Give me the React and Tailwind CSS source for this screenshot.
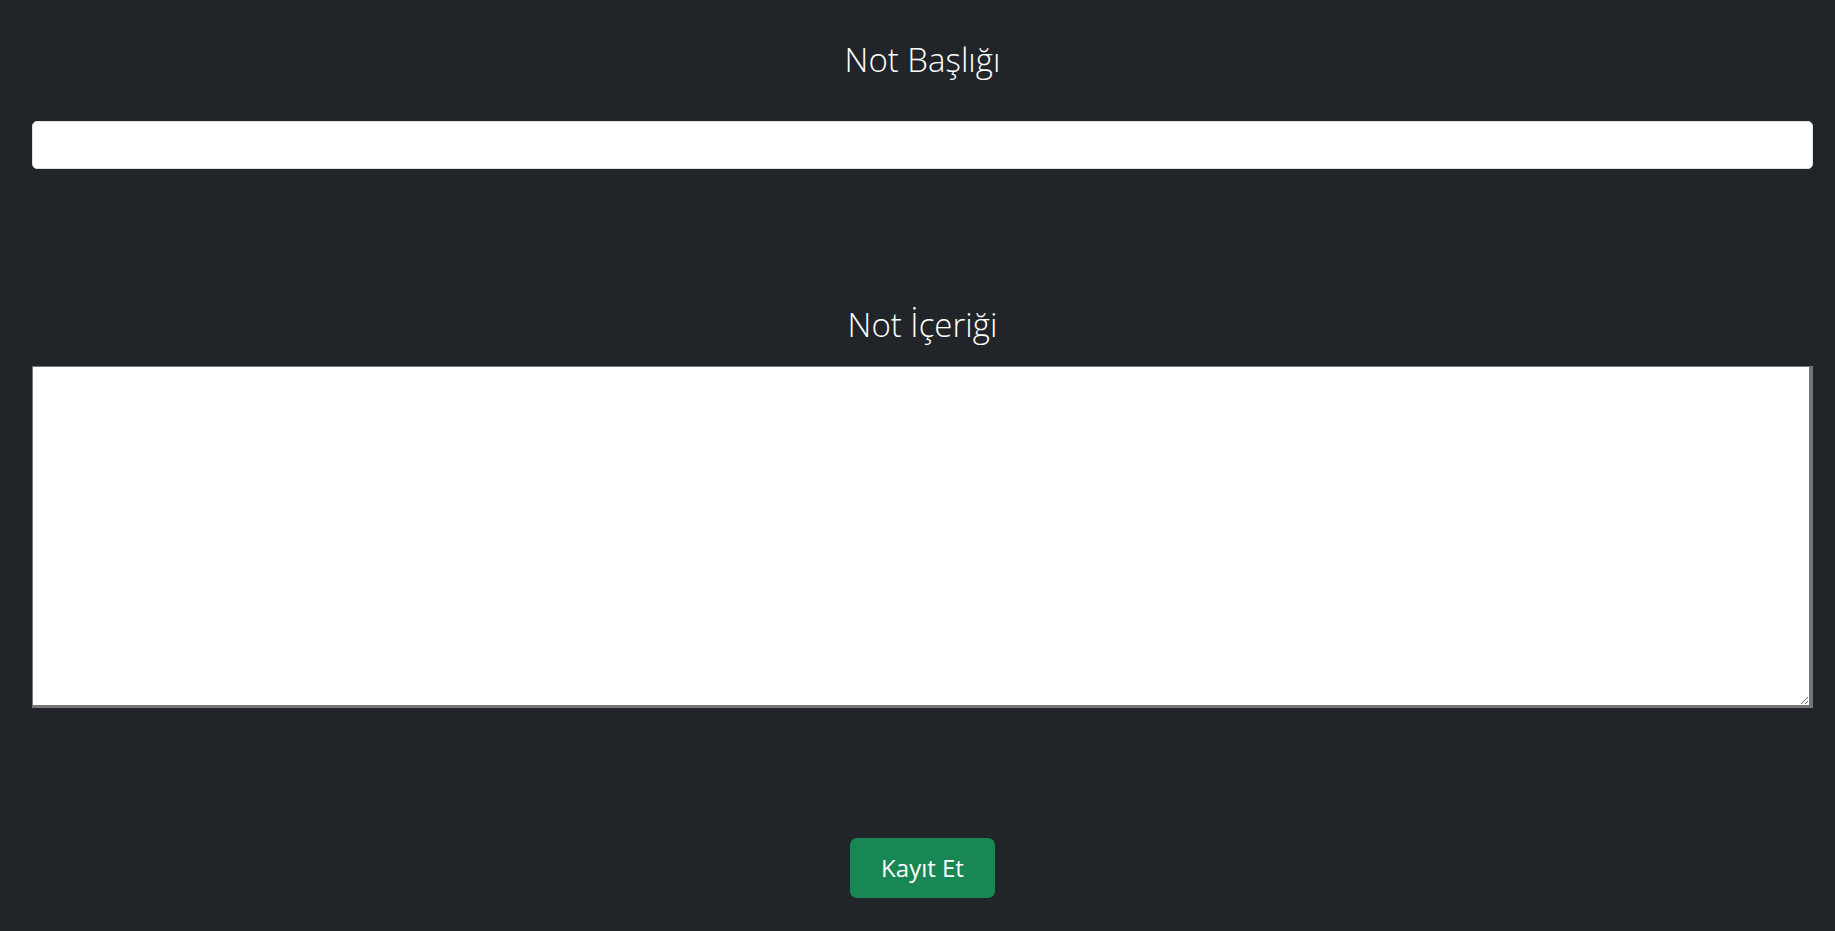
export default function App() {
  return (
    <div
      className="h-[931px] overflow-hidden bg-[#212529] pl-[32px] pr-[22px] pt-[39px] text-white"
      style={{ fontFamily: '"Open Sans", "Noto Sans", sans-serif' }}
    >
      <form className="flex flex-col" onSubmit={(e) => e.preventDefault()}>
        <h3 className="text-center text-[33px] font-light leading-[42px]">
          Not Başlığı
        </h3>
        <input
          type="text"
          className="mt-[40px] h-[48px] w-full rounded-[5px] border border-[#dee2e6] bg-white px-4 text-[20px] text-[#212529] outline-none"
        />

        <h3 className="mt-[135px] text-center text-[33px] font-light leading-[42px]">
          Not İçeriği
        </h3>
        <textarea className="mt-[20px] block h-[342px] w-full border-t border-l border-r-4 border-b-[3px] border-[#767676] bg-white p-1 text-[16px] text-black outline-none" />

        <div className="mt-[130px] flex justify-center">
          <button
            type="submit"
            className="h-[60px] w-[145px] rounded-[7px] bg-[#198754] text-[24px] text-white"
          >
            Kayıt Et
          </button>
        </div>
      </form>
    </div>
  );
}
